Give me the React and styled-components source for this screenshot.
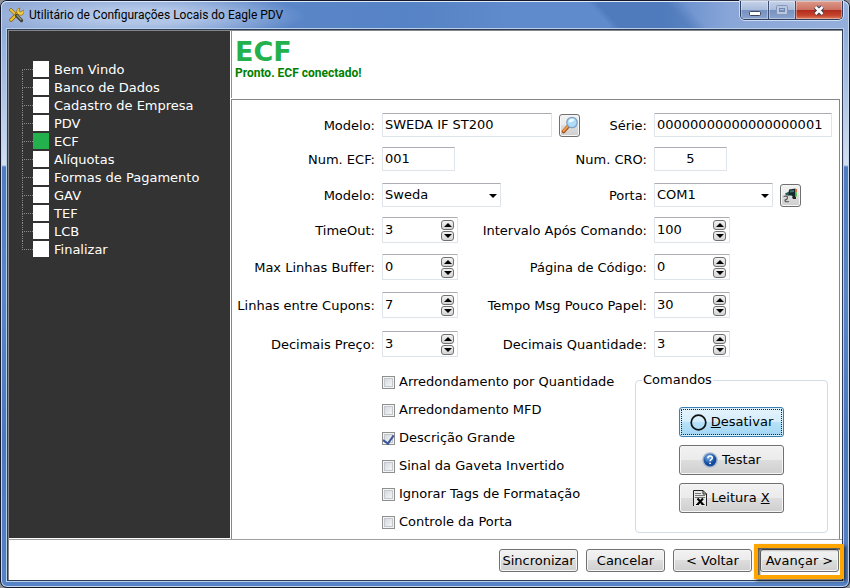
import { useState } from "react";
import styled, { createGlobalStyle } from "styled-components";

const GlobalStyle = createGlobalStyle`
  * {
    box-sizing: border-box;
  }
  body {
    margin: 0;
    background: #8c9198;
    color: #000;
    font-family: "DejaVu Sans", Verdana, sans-serif;
    font-size: 13px;
    line-height: 18px;
  }
  button, input, select {
    font: inherit;
    color: inherit;
    margin: 0;
  }
`;

const Window = styled.div`
  display: flex;
  flex-direction: column;
  min-height: 100vh;
  padding: 0 6px 6px;
  border: 1px solid #14182c;
  border-radius: 7px;
  box-shadow: inset 0 0 0 1px #c3d6ee;
  background: linear-gradient(
    180deg,
    #86a6d6 0,
    #9db7de 60px,
    #d3def0 164px,
    #4f7cbf 166px,
    #5a86c8 50%,
    #4a78bc 75%,
    #5683c6 100%
  );
`;

const TitleBar = styled.header`
  display: flex;
  align-items: center;
  height: 28px;
  margin: 0 -6px;
  padding-left: 7px;
  border-radius: 6px 6px 0 0;
  box-shadow: inset 0 1px 0 #dfe9f6, inset 1px 0 0 #c3d6ee, inset -1px 0 0 #c3d6ee;
  background: radial-gradient(ellipse 165px 24px at 140px 15px, rgba(190, 208, 236, 0.8) 30%, rgba(190, 208, 236, 0) 100%),
    linear-gradient(48deg, rgba(60, 105, 170, 0) 70%, rgba(60, 105, 170, 0.45) 71%, rgba(60, 105, 170, 0.45) 79%, rgba(60, 105, 170, 0) 81%),
    linear-gradient(90deg, #8fa9d6 0%, #7d9cd2 20%, #5a86c8 34%, #5683c5 48%, #5f8acb 60%, #5f8acb 78%, #8aa6d8 86%, #93aedb 97%);

  .title__text {
    flex: 1;
    margin: 0 0 0 5px;
    font-family: Roboto, "Open Sans", sans-serif;
    font-size: 12px;
    font-weight: 400;
    white-space: nowrap;
  }
`;

const WindowControls = styled.div`
  display: flex;
  align-self: flex-start;
  margin-right: 6px;
  border: 1px solid #2f3d5c;
  border-top: 0;
  border-radius: 0 0 5px 5px;
  box-shadow: 0 0 0 1px rgba(220, 232, 248, 0.8);
  overflow: hidden;
`;

const ControlButton = styled.button`
  display: flex;
  align-items: center;
  justify-content: center;
  width: ${(p) => p.$width}px;
  height: 18px;
  padding: 0;
  border: 0;
  border-left: ${(p) => (p.$first ? "0" : "1px solid #3d4c6e")};
  box-shadow: inset 0 0 0 1px rgba(255, 255, 255, 0.35);
  background: ${(p) =>
    p.$close
      ? "linear-gradient(180deg, #dc9a8c 0, #cc7262 48%, #b02a1c 50%, #c4442c 80%, #dd8060 100%)"
      : "linear-gradient(180deg, #c6d3e9 0, #a9bcdc 48%, #7690bf 50%, #8aa3cf 100%)"};
`;

const Client = styled.div`
  flex: 1;
  display: flex;
  flex-direction: column;
  border: 1px solid #2c3c56;
  box-shadow: 0 0 0 1px #b9d0ea;
  background: #fff;
`;

const Main = styled.main`
  flex: 1;
  display: flex;
  border: 1px solid #85858a;
  border-right: 0;
  border-bottom-color: #a0a0a0;
`;

const Sidebar = styled.nav`
  width: 221px;
  flex-shrink: 0;
  margin: 0 1px 1px 0;
  padding: 29px 8px 0 13px;
  background: #333;

  ul {
    margin: 0;
    padding: 0;
    list-style: none;
  }
`;

const Branch = styled.span`
  width: 11px;
  display: flex;
  flex-direction: column;

  &::before,
  &::after {
    content: "";
    height: 9px;
    border-left: 1px dotted #8a8a8a;
  }
  &::before {
    border-bottom: 1px dotted #8a8a8a;
  }
  li:first-child &::before,
  li:last-child &::after {
    border-left-color: transparent;
  }
`;

const StepLink = styled.a`
  display: flex;
  align-items: center;
  height: 18px;
  color: #fff;
  text-decoration: none;
  white-space: nowrap;

  .step__box {
    width: 16px;
    height: 16px;
    margin-right: 5px;
    background: ${(p) => (p.$current ? "#22b14c" : "#fff")};
  }
  .step__name {
    padding-top: 2px;
  }
`;

const Content = styled.section`
  flex: 1;
  display: flex;
  flex-direction: column;
  min-width: 0;
  margin-right: 2px;
`;

const PageHeader = styled.div`
  height: 67px;
  margin-bottom: 1px;
  padding: 7px 0 0 3px;
  border-left: 1px solid #928d8f;

  h1 {
    margin: 0;
    color: #22b14c;
    font-size: 27px;
    font-weight: 700;
    line-height: 27px;
  }
  p {
    margin: 0;
    color: #008000;
    font-family: Roboto, "Liberation Sans", sans-serif;
    font-size: 12px;
    font-weight: 700;
    line-height: 16px;
  }
`;

const FormPanel = styled.form`
  flex: 1;
  padding: 8px 7px 0 0;
  border: 1px solid #85858a;
  border-bottom: 0;
`;

const Row = styled.div`
  display: flex;
  align-items: center;
  gap: 7px;
  height: ${(p) => p.$height}px;
`;

const Label = styled.label`
  width: ${(p) => (p.$grow ? "auto" : "143px")};
  flex: ${(p) => (p.$grow ? "1" : "none")};
  padding-top: 1px;
  text-align: right;
  white-space: nowrap;
`;

const Cell = styled.div`
  display: flex;
  align-items: center;
  gap: 7px;
  width: ${(p) => (p.$wide ? "178px" : "auto")};
`;

const fieldBorder = `
  border: 1px solid #dfe3ea;
  border-top-color: #abadb3;
  border-radius: 1px;
  background: #fff;
`;

const TextInput = styled.input`
  ${fieldBorder}
  width: ${(p) => p.$width}px;
  height: 24px;
  padding: 0 2px 1px;
  text-align: ${(p) => p.$align || "left"};
  outline: 0;
`;

const SelectWrap = styled.div`
  position: relative;
  width: 119px;

  select {
    ${fieldBorder}
    appearance: none;
    display: block;
    width: 100%;
    height: 24px;
    padding: 0 20px 1px 2px;
  }
  svg {
    position: absolute;
    right: 4px;
    top: 11px;
    pointer-events: none;
  }
`;

const SpinBox = styled.div`
  ${fieldBorder}
  display: flex;
  width: 76px;
  height: 26px;
  padding: 2px 3px 1px 2px;

  input {
    flex: 1;
    min-width: 0;
    height: 19px;
    padding: 0;
    border: 0;
    outline: 0;
  }
`;

const Spinner = styled.div`
  display: flex;
  flex-direction: column;
  gap: 1px;

  button {
    display: flex;
    align-items: center;
    justify-content: center;
    width: 13px;
    height: 10px;
    padding: 0;
    border: 1px solid #707070;
    border-radius: 3px;
    background: linear-gradient(180deg, #f2f2f2, #d4d4d4);
  }
`;

const ActionButton = styled.button`
  display: flex;
  align-items: center;
  justify-content: center;
  gap: 4px;
  width: ${(p) => p.$width}px;
  height: ${(p) => p.$height}px;
  padding: 0;
  border: 1px solid ${(p) => (p.$active ? "#3c7fb1" : "#707070")};
  border-radius: 3px;
  box-shadow: inset 0 0 0 1px ${(p) => (p.$active ? "#d8f1fc" : "#f6f6f6")};
  background: ${(p) =>
    p.$active
      ? "linear-gradient(180deg, #e6f4fc 0, #d4edfb 49%, #b8e2f8 50%, #a2d6f4 100%)"
      : "linear-gradient(180deg, #f2f2f2 0, #ebebeb 49%, #dddddd 50%, #cfcfcf 100%)"};
  outline: ${(p) => (p.$active ? "1px dotted #222" : "0")};
  outline-offset: -3px;
  white-space: nowrap;
`;

const Options = styled.div`
  display: flex;
  justify-content: space-between;
  padding: 2px 4px 0 150px;
`;

const CheckLabel = styled.label`
  display: flex;
  align-items: center;
  gap: 4px;
  height: 28px;
  white-space: nowrap;
`;

const CheckBox = styled.input`
  appearance: none;
  display: flex;
  align-items: flex-start;
  justify-content: center;
  width: 13px;
  height: 13px;
  border: 1px solid #8e8f8f;
  box-shadow: inset 0 0 0 1px #f4f4f4, inset 0 0 0 2px #c3c8cf;
  background: linear-gradient(135deg, #cdd2d8, #f4f4f4 80%);

  &:checked::before {
    content: "";
    width: 5px;
    height: 9px;
    border: solid #3a5799;
    border-width: 0 2px 2px 0;
    transform: rotate(35deg);
  }
`;

const Commands = styled.fieldset`
  display: flex;
  flex-direction: column;
  align-items: center;
  gap: 8px;
  width: 193px;
  height: 162px;
  margin: 3px 0 0;
  padding: 18px 0 0;
  border: 1px solid #d0dce6;
  border-radius: 4px;

  legend {
    margin-left: 6px;
    padding: 0 1px;
  }
`;

const Footer = styled.footer`
  display: flex;
  justify-content: flex-end;
  gap: 8px;
  height: 40px;
  padding: 9px 3px 0 0;
  border-left: 1px solid #85858a;
`;

// Orange marker drawn over the next-step button
const Highlight = styled.div`
  position: relative;
  height: 23px;

  &::after {
    content: "";
    position: absolute;
    inset: -5px -5px -7px -6px;
    border: 4px solid #ffa500;
    box-shadow: 2px 2px 3px rgba(0, 0, 0, 0.6), inset 2px 2px 2px rgba(0, 0, 0, 0.65);
    pointer-events: none;
  }
`;

const ToolsIcon = () => (
  <svg width="16" height="16" viewBox="0 0 16 16">
    <path d="M3 13 L10 6" stroke="#7d5a10" strokeWidth="3.6" strokeLinecap="round" />
    <path d="M3 13 L10 6" stroke="#f2c32c" strokeWidth="2.2" strokeLinecap="round" />
    <path d="M9 6 a3.5 3.5 0 0 1 3-5 l-1 3 2 1 2.5-2 a3.5 3.5 0 0 1-4.5 5z" fill="#f3cc45" stroke="#8a6a18" strokeWidth=".7" />
    <path d="M1 3 L3 1 L8 6 L6.5 8z" fill="#e9be3a" stroke="#7d6420" strokeWidth=".7" />
    <path d="M8.5 8.5 L13.5 13.5" stroke="#3e3e32" strokeWidth="3.2" strokeLinecap="round" />
    <path d="M9 8.5 L13 12.5" stroke="#9a9a72" strokeWidth="1.2" strokeLinecap="round" />
  </svg>
);

const SearchIcon = () => (
  <svg width="18" height="18" viewBox="0 0 18 18">
    <path d="M2.5 15.5 L7 10.5" stroke="#a34b12" strokeWidth="3.6" strokeLinecap="round" />
    <path d="M2.5 15 L6.5 10.5" stroke="#f29a4a" strokeWidth="2" strokeLinecap="round" />
    <circle cx="11" cy="6.5" r="5.2" fill="#aedcf8" stroke="#7fa2c6" strokeWidth="1.3" />
    <path d="M7.5 6.5 a3.7 3.7 0 0 1 6-3 q-1 3-6 3z" fill="#eefaff" />
  </svg>
);

const PlugIcon = () => (
  <svg width="17" height="17" viewBox="0 0 17 17">
    <path d="M1.5 9.5 q4-1 4 1 t-2.5 2.5 q-.5 2.5 4 1.5" fill="none" stroke="#555" strokeWidth="1.1" />
    <path d="M3 6.5 L7 4.5 V8.5 H4z" fill="#2f5f58" />
    <path d="M7 2.5 L13.5 1.5 V10 H11 L9.5 8.5 H6.5z" fill="#17282a" />
    <path d="M8 3.5 L12 3 V5 L8 5.5z" fill="#3d746c" />
    <path d="M10 10 h4 v2 h-3z" fill="#222" />
    <path d="M14.5 2 v3.5" stroke="#e36b4c" strokeWidth="1" />
    <path d="M14.5 5.5 v4" stroke="#59c856" strokeWidth="1" />
  </svg>
);

const CircleIcon = () => (
  <svg width="17" height="17" viewBox="0 0 17 17">
    <circle cx="8.5" cy="8.5" r="7.3" fill="none" stroke="#111" strokeWidth="1.7" />
  </svg>
);

const HelpIcon = () => (
  <svg width="16" height="16" viewBox="0 0 16 16">
    <defs>
      <radialGradient id="ball" cx="40%" cy="30%">
        <stop offset="0" stopColor="#7db6ee" />
        <stop offset="1" stopColor="#124a9c" />
      </radialGradient>
    </defs>
    <circle cx="8" cy="8" r="7.8" fill="#a9b9ce" />
    <circle cx="8" cy="8" r="6.4" fill="url(#ball)" />
    <path d="M5.8 6.3 q.2-2.2 2.3-2.2 2.2 0 2.2 1.8 0 1.1-1.2 1.7 -1 .5-1 1.6" fill="none" stroke="#fff" strokeWidth="1.5" />
    <circle cx="8.1" cy="11.3" r=".9" fill="#fff" />
  </svg>
);

const ReportIcon = () => (
  <svg width="14" height="17" viewBox="0 0 14 17">
    <path d="M.5 16 V.5 H10 L13.5 4 V16" fill="#e8e8e8" stroke="#222" strokeWidth="1" />
    <path d="M10 .5 V4 H13.5" fill="none" stroke="#222" />
    <path d="M2 3.5 H8 M2 5.5 H12 M2 7.5 H12" stroke="#777" strokeWidth="1" />
    <path d="M4.5 8.5 L10 14.5 M10 8.5 L4.5 14.5" stroke="#000" strokeWidth="2" />
    <path d="M3 14.5 H6 M8.5 14.5 H11.5" stroke="#000" />
  </svg>
);

const Triangle = ({ up }) => (
  <svg width="8" height="4" viewBox="0 0 8 4">
    <path d={up ? "M0 4 L4 0 L8 4z" : "M0 0 L4 4 L8 0z"} fill="#000" />
  </svg>
);

const steps = [
  "Bem Vindo",
  "Banco de Dados",
  "Cadastro de Empresa",
  "PDV",
  "ECF",
  "Alíquotas",
  "Formas de Pagamento",
  "GAV",
  "TEF",
  "LCB",
  "Finalizar",
];

const spinRows = [
  { height: 32, fields: [["timeout", "TimeOut:", 3], ["intervalo", "Intervalo Após Comando:", 100]] },
  { height: 42, fields: [["buffer", "Max Linhas Buffer:", 0], ["pagina", "Página de Código:", 0]] },
  { height: 34, fields: [["linhas", "Linhas entre Cupons:", 7], ["papel", "Tempo Msg Pouco Papel:", 30]] },
  { height: 44, fields: [["preco", "Decimais Preço:", 3], ["quantidade", "Decimais Quantidade:", 3]] },
];

const options = [
  ["Arredondamento por Quantidade", false],
  ["Arredondamento MFD", false],
  ["Descrição Grande", true],
  ["Sinal da Gaveta Invertido", false],
  ["Ignorar Tags de Formatação", false],
  ["Controle da Porta", false],
];

const SpinField = ({ id, initial }) => {
  const [value, setValue] = useState(initial);
  return (
    <SpinBox>
      <input id={id} value={value} onChange={(e) => setValue(Number(e.target.value) || 0)} />
      <Spinner>
        <button type="button" aria-label="Aumentar" onClick={() => setValue(value + 1)}>
          <Triangle up />
        </button>
        <button type="button" aria-label="Diminuir" onClick={() => setValue(Math.max(0, value - 1))}>
          <Triangle />
        </button>
      </Spinner>
    </SpinBox>
  );
};

const SelectField = ({ id, items }) => (
  <SelectWrap>
    <select id={id} defaultValue={items[0]}>
      {items.map((item) => (
        <option key={item}>{item}</option>
      ))}
    </select>
    <Triangle />
  </SelectWrap>
);

export default function App() {
  return (
    <>
      <GlobalStyle />
      <Window>
        <TitleBar>
          <ToolsIcon />
          <h2 className="title__text">Utilitário de Configurações Locais do Eagle PDV</h2>
          <WindowControls>
            <ControlButton $width={27} $first aria-label="Minimizar">
              <svg width="12" height="12">
                <rect x=".5" y="7.5" width="11" height="4" rx="1" fill="#fff" stroke="#3c4560" />
              </svg>
            </ControlButton>
            <ControlButton $width={27} aria-label="Maximizar">
              <svg width="12" height="10">
                <rect x="2" y="2" width="8" height="6" fill="none" stroke="#b9c8df" strokeWidth="2" />
                <rect x="3.5" y="3.5" width="5" height="3" fill="none" stroke="#7187ae" />
                <rect x=".5" y=".5" width="11" height="9" rx="1" fill="none" stroke="#8598ba" />
              </svg>
            </ControlButton>
            <ControlButton $width={47} $close aria-label="Fechar">
              <svg width="12" height="11" viewBox="0 0 12 11">
                <path d="M2.5 2 L9.5 9 M9.5 2 L2.5 9" stroke="#3c3f55" strokeWidth="4.6" />
                <path d="M2.5 2 L9.5 9 M9.5 2 L2.5 9" stroke="#fff" strokeWidth="2.6" />
              </svg>
            </ControlButton>
          </WindowControls>
        </TitleBar>
        <Client>
          <Main>
            <Sidebar>
              <ul>
                {steps.map((step) => (
                  <li key={step}>
                    <StepLink href="#" $current={step === "ECF"}>
                      <Branch />
                      <span className="step__box" />
                      <span className="step__name">{step}</span>
                    </StepLink>
                  </li>
                ))}
              </ul>
            </Sidebar>
            <Content>
              <PageHeader>
                <h1>ECF</h1>
                <p>Pronto. ECF conectado!</p>
              </PageHeader>
              <FormPanel onSubmit={(e) => e.preventDefault()}>
                <Row $height={34}>
                  <Label htmlFor="modelo">Modelo:</Label>
                  <Cell>
                    <TextInput id="modelo" $width={170} defaultValue="SWEDA IF ST200" />
                    <ActionButton type="button" $width={21} $height={23} aria-label="Pesquisar">
                      <SearchIcon />
                    </ActionButton>
                  </Cell>
                  <Label $grow htmlFor="serie">Série:</Label>
                  <Cell $wide>
                    <TextInput id="serie" $width={178} defaultValue="00000000000000000001" />
                  </Cell>
                </Row>
                <Row $height={34}>
                  <Label htmlFor="numEcf">Num. ECF:</Label>
                  <TextInput id="numEcf" $width={73} defaultValue="001" />
                  <Label $grow htmlFor="numCro">Num. CRO:</Label>
                  <Cell $wide>
                    <TextInput id="numCro" $width={73} $align="center" defaultValue="5" />
                  </Cell>
                </Row>
                <Row $height={38}>
                  <Label htmlFor="marca">Modelo:</Label>
                  <SelectField id="marca" items={["Sweda", "Bematech", "Daruma"]} />
                  <Label $grow htmlFor="porta">Porta:</Label>
                  <Cell $wide>
                    <SelectField id="porta" items={["COM1", "COM2", "COM3"]} />
                    <ActionButton type="button" $width={21} $height={23} aria-label="Testar porta">
                      <PlugIcon />
                    </ActionButton>
                  </Cell>
                </Row>
                {spinRows.map(({ height, fields: [left, right] }) => (
                  <Row key={left[0]} $height={height}>
                    <Label htmlFor={left[0]}>{left[1]}</Label>
                    <SpinField id={left[0]} initial={left[2]} />
                    <Label $grow htmlFor={right[0]}>{right[1]}</Label>
                    <Cell $wide>
                      <SpinField id={right[0]} initial={right[2]} />
                    </Cell>
                  </Row>
                ))}
                <Options>
                  <div>
                    {options.map(([text, checked]) => (
                      <CheckLabel key={text}>
                        <CheckBox type="checkbox" defaultChecked={checked} />
                        {text}
                      </CheckLabel>
                    ))}
                  </div>
                  <Commands>
                    <legend>Comandos</legend>
                    <ActionButton type="button" $width={105} $height={30} $active>
                      <CircleIcon />
                      <span><u>D</u>esativar</span>
                    </ActionButton>
                    <ActionButton type="button" $width={105} $height={30}>
                      <HelpIcon />
                      Testar
                    </ActionButton>
                    <ActionButton type="button" $width={105} $height={30}>
                      <ReportIcon />
                      <span>Leitura <u>X</u></span>
                    </ActionButton>
                  </Commands>
                </Options>
              </FormPanel>
            </Content>
          </Main>
          <Footer>
            <ActionButton $width={79} $height={23}>Sincronizar</ActionButton>
            <ActionButton $width={79} $height={23}>Cancelar</ActionButton>
            <ActionButton $width={79} $height={23}>&lt; Voltar</ActionButton>
            <Highlight>
              <ActionButton $width={79} $height={23}>Avançar &gt;</ActionButton>
            </Highlight>
          </Footer>
        </Client>
      </Window>
    </>
  );
}
